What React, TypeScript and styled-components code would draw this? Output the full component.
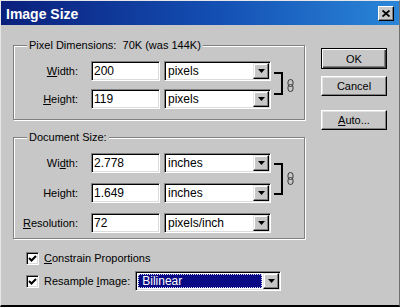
import React from 'react';
import styled, {createGlobalStyle} from 'styled-components';

const GlobalStyle = createGlobalStyle`
  html, body {
    margin: 0;
    padding: 0;
    background: #c7c7c7;
  }
  body {
    font-family: "Liberation Sans", Arial, sans-serif;
    font-size: 11px;
    color: #000;
  }
`

const Window = styled.div`
  width: 400px;
  height: 307px;
  box-sizing: border-box;
  display: flex;
  flex-direction: column;
  background: #c7c7c7;
  border-top: 1px solid #e6e6e6;
  border-left: 1px solid #e6e6e6;
  border-right: 1px solid #707070;
  border-bottom: 2px solid #000;
`

const TitleBar = styled.div`
  flex: none;
  height: 24px;
  display: flex;
  align-items: center;
  justify-content: space-between;
  padding: 0 5px 0 5px;
  background: linear-gradient(90deg, #0a1f7c 0%, #1450b4 55%, #2a86d8 100%);
`

const Title = styled.span`
  color: #fff;
  font-weight: bold;
  font-size: 14px;
  padding-top: 2px;
`

const CloseButton = styled.div`
  width: 16px;
  height: 15px;
  box-sizing: border-box;
  display: flex;
  align-items: center;
  justify-content: center;
  background: #c7c7c7;
  border: 1px solid;
  border-color: #fff #000 #000 #fff;
  box-shadow: inset -1px -1px 0 #808080;
`

const Body = styled.div`
  display: flex;
  padding: 13px 0 0 12px;
`

const LeftCol = styled.div`
  width: 292px;
  display: flex;
  flex-direction: column;
`

const Group = styled.fieldset<{ $pb: number }>`
  margin: 0 0 10px 0;
  padding: 9px 0 ${p => p.$pb}px 0;
  min-width: 0;
  border: 1px solid #808080;
  box-shadow: inset 1px 1px 0 #fff, 1px 1px 0 #fff;
`

const Legend = styled.legend`
  margin-left: 13px;
  padding: 0 2px;
  line-height: 14px;
  background: #c7c7c7;
`

const Fields = styled.div<{ $rowGap: number }>`
  display: grid;
  grid-template-columns: 77px 73px 110px 13px 7px;
  grid-auto-rows: 20px;
  row-gap: ${p => p.$rowGap}px;
`

const Label = styled.div`
  grid-column: 1;
  align-self: center;
  text-align: right;
  padding-right: 13px;
`

const Field = styled.div`
  grid-column: 2;
  width: 69px;
  height: 20px;
  box-sizing: border-box;
  background: #fff;
  border: 1px solid;
  border-color: #808080 #fff #fff #808080;
  box-shadow: inset 1px 1px 0 #000, inset -1px -1px 0 #dcdcdc;
  padding: 2px 0 0 2px;
  font-size: 12px;
  line-height: 15px;
`

const Select = styled.div<{ $width: number }>`
  width: ${p => p.$width}px;
  height: 20px;
  box-sizing: border-box;
  display: flex;
  align-items: center;
  background: #fff;
  border: 1px solid;
  border-color: #808080 #fff #fff #808080;
  box-shadow: inset 1px 1px 0 #000, inset -1px -1px 0 #dcdcdc;
  padding: 1px 1px 1px 1px;
  font-size: 12px;
`

const UnitSelect = styled(Select)`
  grid-column: 3;
`

const Value = styled.div`
  flex: 1;
  padding-left: 2px;
  line-height: 16px;
`

const Highlight = styled.div`
  flex: 1;
  margin: 1px 1px 1px 1px;
  height: 14px;
  box-sizing: border-box;
  padding-left: 3px;
  line-height: 12px;
  color: #fff;
  background: #0a0a84;
  border: 1px dotted #d8d8ff;
`

const DropButton = styled.div`
  flex: none;
  width: 16px;
  height: 16px;
  box-sizing: border-box;
  display: flex;
  align-items: center;
  justify-content: center;
  background: #c7c7c7;
  border: 1px solid;
  border-color: #e6e6e6 #000 #000 #e6e6e6;
  box-shadow: inset -1px -1px 0 #808080, inset 1px 1px 0 #fff;
`

const Bracket = styled.div<{ $top: number; $height: number }>`
  grid-column: 4;
  grid-row: 1 / span 2;
  align-self: start;
  margin-top: ${p => p.$top}px;
  width: 9px;
  height: ${p => p.$height}px;
  box-sizing: border-box;
  border: 2px solid #000;
  border-left: none;
`

const Chain = styled.div`
  grid-column: 5;
  grid-row: 1 / span 2;
  align-self: center;
  height: 13px;
`

const Checks = styled.div`
  display: flex;
  flex-direction: column;
  gap: 6px;
  margin-top: 2px;
  padding-left: 13px;
`

const CheckRow = styled.div<{ $height: number }>`
  display: flex;
  align-items: center;
  height: ${p => p.$height}px;
`

const CheckBox = styled.div`
  width: 13px;
  height: 13px;
  box-sizing: border-box;
  display: flex;
  align-items: center;
  justify-content: center;
  background: #fff;
  border: 1px solid;
  border-color: #808080 #fff #fff #808080;
  box-shadow: inset 1px 1px 0 #000, inset -1px -1px 0 #dcdcdc;
  margin-right: 5px;
`

const CheckLabel = styled.span`
  margin-right: 5px;
`

const RightCol = styled.div`
  display: flex;
  flex-direction: column;
  margin-left: 16px;
  padding-top: 10px;
`

const Button = styled.div<{ $default?: boolean; $mt?: number }>`
  width: 66px;
  height: ${p => (p.$default ? 21 : 20)}px;
  box-sizing: border-box;
  margin-top: ${p => p.$mt || 0}px;
  display: flex;
  align-items: center;
  justify-content: center;
  background: #c7c7c7;
  border: 1px solid;
  border-color: ${p => (p.$default ? '#000' : '#fff #000 #000 #fff')};
  box-shadow: ${p => (p.$default
    ? 'inset 1px 1px 0 #fff, inset -1px -1px 0 #404040, inset -2px -2px 0 #808080'
    : 'inset -1px -1px 0 #808080, inset 1px 1px 0 #e2e2e2')};
`

const Arrow = () => (
  <svg width="7" height="4" viewBox="0 0 7 4">
    <polygon points="0,0 7,0 3.5,4" fill="#000"/>
  </svg>
)

const Tick = () => (
  <svg width="9" height="9" viewBox="0 0 9 9">
    <polyline points="1,4 3.5,6.5 8,2" fill="none" stroke="#000" strokeWidth="2"/>
  </svg>
)

const ChainIcon = () => (
  <svg width="7" height="13" viewBox="0 0 7 13">
    <rect x="1" y="0.5" width="5" height="7" rx="2.5" fill="none" stroke="#3a3a3a"/>
    <rect x="1" y="5.5" width="5" height="7" rx="2.5" fill="none" stroke="#3a3a3a"/>
  </svg>
)

type Row = { label: React.ReactNode; value: string; unit: string }

const pixelRows: Row[] = [
  {label: <><u>W</u>idth:</>, value: '200', unit: 'pixels'},
  {label: <><u>H</u>eight:</>, value: '119', unit: 'pixels'},
]

const docRows: Row[] = [
  {label: <>Wi<u>d</u>th:</>, value: '2.778', unit: 'inches'},
  {label: <>Hei<u>g</u>ht:</>, value: '1.649', unit: 'inches'},
  {label: <><u>R</u>esolution:</>, value: '72', unit: 'pixels/inch'},
]

const FieldRows = ({rows}: { rows: Row[] }) => (
  <>
    {rows.map((r, i) => (
      <React.Fragment key={i}>
        <Label style={{gridRow: i + 1}}>{r.label}</Label>
        <Field style={{gridRow: i + 1}}>{r.value}</Field>
        <UnitSelect $width={107} style={{gridRow: i + 1}}>
          <Value>{r.unit}</Value>
          <DropButton><Arrow/></DropButton>
        </UnitSelect>
      </React.Fragment>
    ))}
  </>
)

export default function App() {
  return (
    <>
      <GlobalStyle/>
      <Window>
        <TitleBar>
          <Title>Image Size</Title>
          <CloseButton>
            <svg width="8" height="7" viewBox="0 0 8 7">
              <path d="M0.5 0.5 L7.5 6.5 M7.5 0.5 L0.5 6.5" stroke="#000" strokeWidth="1.8"/>
            </svg>
          </CloseButton>
        </TitleBar>
        <Body>
          <LeftCol>
            <Group $pb={10}>
              <Legend>Pixel Dimensions:&nbsp; 70K (was 144K)</Legend>
              <Fields $rowGap={8}>
                <FieldRows rows={pixelRows}/>
                <Bracket $top={11} $height={23}/>
                <Chain><ChainIcon/></Chain>
              </Fields>
            </Group>
            <Group $pb={5}>
              <Legend>Document Size:</Legend>
              <Fields $rowGap={10}>
                <FieldRows rows={docRows}/>
                <Bracket $top={10} $height={32}/>
                <Chain><ChainIcon/></Chain>
              </Fields>
            </Group>
            <Checks>
              <CheckRow $height={14}>
                <CheckBox><Tick/></CheckBox>
                <CheckLabel><u>C</u>onstrain Proportions</CheckLabel>
              </CheckRow>
              <CheckRow $height={20}>
                <CheckBox><Tick/></CheckBox>
                <CheckLabel>Resample <u>I</u>mage:</CheckLabel>
                <Select $width={146}>
                  <Highlight>Bilinear</Highlight>
                  <DropButton><Arrow/></DropButton>
                </Select>
              </CheckRow>
            </Checks>
          </LeftCol>
          <RightCol>
            <Button $default>OK</Button>
            <Button $mt={7}>Cancel</Button>
            <Button $mt={14}><span><u>A</u>uto...</span></Button>
          </RightCol>
        </Body>
      </Window>
    </>
  );
}
